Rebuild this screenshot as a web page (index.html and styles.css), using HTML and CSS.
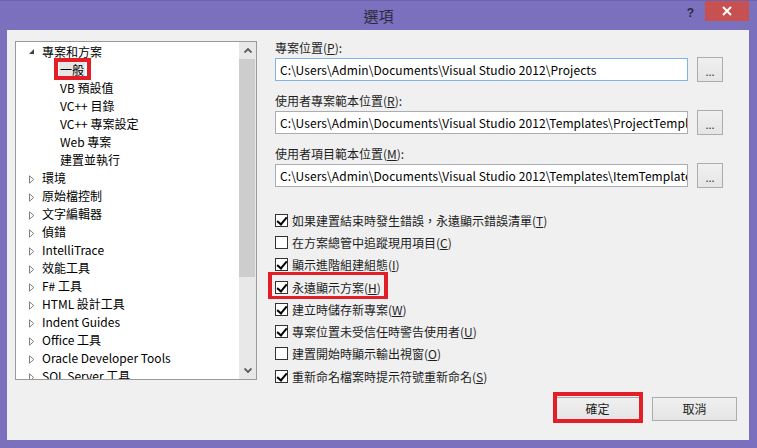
FILE: index.html
```html
<!DOCTYPE html>
<html lang="zh-Hant">
<head>
<meta charset="utf-8">
<title>選項</title>
<link rel="stylesheet" href="styles.css">
</head>
<body>
<div class="window">
  <div class="titlebar">
    <div class="tb-left"></div>
    <div class="title">選項</div>
    <div class="tb-right">
      <div class="help">?</div>
      <div class="close">
        <svg width="10" height="10" viewBox="0 0 10 10"><path d="M1 1 L9 9 M9 1 L1 9" stroke="#fff" stroke-width="2" fill="none"/></svg>
      </div>
    </div>
  </div>
  <div class="client">
    <div class="main">
      <div class="tree">
        <div class="tree-list">
          <div class="node">
            <span class="exp"><svg width="6" height="6" viewBox="0 0 6 6"><path d="M5 0 L5 5 L0 5 Z" fill="#404040"/></svg></span>
            <span class="lbl">專案和方案</span>
          </div>
          <div class="node child selected"><span class="lbl">一般</span><span class="mark mark-general"></span></div>
          <div class="node child"><span class="lbl">VB 預設值</span></div>
          <div class="node child"><span class="lbl">VC++ 目錄</span></div>
          <div class="node child"><span class="lbl">VC++ 專案設定</span></div>
          <div class="node child"><span class="lbl">Web 專案</span></div>
          <div class="node child"><span class="lbl">建置並執行</span></div>
          <div class="node"><span class="exp c"><svg width="6" height="9" viewBox="0 0 6 9"><path d="M0.5 0.8 L4.8 4.5 L0.5 8.2 Z" fill="none" stroke="#808080" stroke-width="1"/></svg></span><span class="lbl">環境</span></div>
          <div class="node"><span class="exp c"><svg width="6" height="9" viewBox="0 0 6 9"><path d="M0.5 0.8 L4.8 4.5 L0.5 8.2 Z" fill="none" stroke="#808080" stroke-width="1"/></svg></span><span class="lbl">原始檔控制</span></div>
          <div class="node"><span class="exp c"><svg width="6" height="9" viewBox="0 0 6 9"><path d="M0.5 0.8 L4.8 4.5 L0.5 8.2 Z" fill="none" stroke="#808080" stroke-width="1"/></svg></span><span class="lbl">文字編輯器</span></div>
          <div class="node"><span class="exp c"><svg width="6" height="9" viewBox="0 0 6 9"><path d="M0.5 0.8 L4.8 4.5 L0.5 8.2 Z" fill="none" stroke="#808080" stroke-width="1"/></svg></span><span class="lbl">偵錯</span></div>
          <div class="node"><span class="exp c"><svg width="6" height="9" viewBox="0 0 6 9"><path d="M0.5 0.8 L4.8 4.5 L0.5 8.2 Z" fill="none" stroke="#808080" stroke-width="1"/></svg></span><span class="lbl">IntelliTrace</span></div>
          <div class="node"><span class="exp c"><svg width="6" height="9" viewBox="0 0 6 9"><path d="M0.5 0.8 L4.8 4.5 L0.5 8.2 Z" fill="none" stroke="#808080" stroke-width="1"/></svg></span><span class="lbl">效能工具</span></div>
          <div class="node"><span class="exp c"><svg width="6" height="9" viewBox="0 0 6 9"><path d="M0.5 0.8 L4.8 4.5 L0.5 8.2 Z" fill="none" stroke="#808080" stroke-width="1"/></svg></span><span class="lbl">F# 工具</span></div>
          <div class="node"><span class="exp c"><svg width="6" height="9" viewBox="0 0 6 9"><path d="M0.5 0.8 L4.8 4.5 L0.5 8.2 Z" fill="none" stroke="#808080" stroke-width="1"/></svg></span><span class="lbl">HTML 設計工具</span></div>
          <div class="node"><span class="exp c"><svg width="6" height="9" viewBox="0 0 6 9"><path d="M0.5 0.8 L4.8 4.5 L0.5 8.2 Z" fill="none" stroke="#808080" stroke-width="1"/></svg></span><span class="lbl">Indent Guides</span></div>
          <div class="node"><span class="exp c"><svg width="6" height="9" viewBox="0 0 6 9"><path d="M0.5 0.8 L4.8 4.5 L0.5 8.2 Z" fill="none" stroke="#808080" stroke-width="1"/></svg></span><span class="lbl">Office 工具</span></div>
          <div class="node"><span class="exp c"><svg width="6" height="9" viewBox="0 0 6 9"><path d="M0.5 0.8 L4.8 4.5 L0.5 8.2 Z" fill="none" stroke="#808080" stroke-width="1"/></svg></span><span class="lbl">Oracle Developer Tools</span></div>
          <div class="node"><span class="exp c"><svg width="6" height="9" viewBox="0 0 6 9"><path d="M0.5 0.8 L4.8 4.5 L0.5 8.2 Z" fill="none" stroke="#808080" stroke-width="1"/></svg></span><span class="lbl">SQL Server 工具</span></div>
        </div>
        <div class="vscroll">
          <div class="sb-btn"><svg width="8" height="5" viewBox="0 0 8 5"><path d="M0.5 4.5 L4 1 L7.5 4.5" fill="none" stroke="#5a5a5a" stroke-width="1.8"/></svg></div>
          <div class="sb-track"><div class="sb-thumb"></div></div>
          <div class="sb-btn"><svg width="8" height="5" viewBox="0 0 8 5"><path d="M0.5 0.5 L4 4 L7.5 0.5" fill="none" stroke="#5a5a5a" stroke-width="1.8"/></svg></div>
        </div>
      </div>
      <div class="panel">
        <div class="field">
          <div class="flabel">專案位置(<u>P</u>):</div>
          <div class="frow">
            <div class="textbox focus">C:\Users\Admin\Documents\Visual Studio 2012\Projects</div>
            <div class="browse">...</div>
          </div>
        </div>
        <div class="field">
          <div class="flabel">使用者專案範本位置(<u>R</u>):</div>
          <div class="frow">
            <div class="textbox">C:\Users\Admin\Documents\Visual Studio 2012\Templates\ProjectTemplates</div>
            <div class="browse">...</div>
          </div>
        </div>
        <div class="field">
          <div class="flabel">使用者項目範本位置(<u>M</u>):</div>
          <div class="frow">
            <div class="textbox">C:\Users\Admin\Documents\Visual Studio 2012\Templates\ItemTemplates</div>
            <div class="browse">...</div>
          </div>
        </div>
        <div class="checks">
          <div class="check"><span class="box on"></span><span>如果建置結束時發生錯誤，永遠顯示錯誤清單(<u>T</u>)</span></div>
          <div class="check"><span class="box"></span><span>在方案總管中追蹤現用項目(<u>C</u>)</span></div>
          <div class="check"><span class="box on"></span><span>顯示進階組建組態(<u>I</u>)</span></div>
          <div class="check"><span class="box on"></span><span>永遠顯示方案(<u>H</u>)</span><span class="mark mark-check"></span></div>
          <div class="check"><span class="box on"></span><span>建立時儲存新專案(<u>W</u>)</span></div>
          <div class="check"><span class="box on"></span><span>專案位置未受信任時警告使用者(<u>U</u>)</span></div>
          <div class="check"><span class="box"></span><span>建置開始時顯示輸出視窗(<u>O</u>)</span></div>
          <div class="check"><span class="box on"></span><span>重新命名檔案時提示符號重新命名(<u>S</u>)</span></div>
        </div>
        <div class="sep"></div>
      </div>
    </div>
    <div class="buttons">
      <div class="btn ok">確定<span class="mark mark-ok"></span></div>
      <div class="btn">取消</div>
    </div>
  </div>
</div>
</body>
</html>
```

FILE: styles.css
```css
* { box-sizing: border-box; }
html, body {
  margin: 0;
  padding: 0;
  background: #7a70bd;
}
body {
  font-family: "Noto Sans CJK TC", "Noto Sans", sans-serif;
  font-size: 12px;
  color: #000;
}
.window {
  width: 757px;
  height: 448px;
  background: #7a70bd;
  border-top: 1px solid #6d63b2;
  display: flex;
  flex-direction: column;
}
.titlebar {
  height: 29px;
  display: grid;
  grid-template-columns: 1fr auto 1fr;
  align-items: start;
}
.title {
  font-size: 15px;
  line-height: 15px;
  padding-top: 7px;
  color: #2a2a3a;
}
.tb-right {
  display: flex;
  justify-content: flex-end;
  align-items: flex-start;
  padding-right: 8px;
}
.help {
  font-family: "Liberation Sans", sans-serif;
  font-weight: bold;
  font-size: 12px;
  line-height: 12px;
  color: #2a2a3a;
  margin-top: 6px;
  margin-right: 11px;
}
.close {
  width: 44px;
  height: 20px;
  background: #c75050;
  display: flex;
  align-items: center;
  justify-content: center;
}
.client {
  margin: 0 8px 8px 7px;
  height: 410px;
  background: #f0f0f0;
  padding: 9px 0 0 8px;
  display: flex;
  flex-direction: column;
}
.main {
  display: flex;
  height: 341px;
}
.tree {
  margin-top: 2px;
  width: 242px;
  height: 339px;
  border: 1px solid #9a9a9a;
  background: #fff;
  display: flex;
  overflow: hidden;
}
.tree-list {
  flex: 1;
  padding-top: 1px;
  overflow: hidden;
}
.node {
  position: relative;
  height: 18px;
  line-height: 18px;
  display: flex;
  align-items: center;
  padding-left: 13px;
  white-space: nowrap;
}
.exp {
  width: 13px;
  height: 18px;
  display: flex;
  align-items: center;
  padding-bottom: 1px;
}
.exp.c { padding-bottom: 0; padding-top: 2px; }
.node.child { padding-left: 44px; }
.node.selected .lbl {
  background: #e6e6e6;
  padding: 0 1px;
  margin-left: -1px;
}
.vscroll {
  width: 17px;
  background: #e8e8e8;
  display: flex;
  flex-direction: column;
}
.sb-btn {
  height: 17px;
  display: flex;
  align-items: center;
  justify-content: center;
}
.sb-track {
  flex: 1;
}
.sb-thumb {
  width: 16px;
  height: 218px;
  background: #cdcdcd;
}
.panel {
  margin-left: 18px;
  width: 460px;
  display: flex;
  flex-direction: column;
}
.field { margin-bottom: 10px; }
.field:last-of-type { margin-bottom: 0; }
.flabel {
  height: 18px;
  line-height: 18px;
  color: #1e1e1e;
}
.frow {
  height: 25px;
  display: flex;
  align-items: center;
  gap: 9px;
}
.textbox {
  width: 413px;
  height: 23px;
  border: 1px solid #abadb3;
  background: #fff;
  padding-left: 4px;
  line-height: 21px;
  white-space: nowrap;
  overflow: hidden;
  letter-spacing: 0.08px;
  color: #000;
}
.textbox.focus { border-color: #7eb4ea; }
.browse {
  width: 26px;
  height: 25px;
  border: 1px solid #acacac;
  background: linear-gradient(#f0f0f0, #e5e5e5);
  text-align: center;
  line-height: 26px;
  font-size: 11px;
  color: #333;
}
.checks {
  margin-top: 11px;
  display: flex;
  flex-direction: column;
}
.check {
  position: relative;
  height: 22.3px;
  display: flex;
  align-items: center;
  gap: 4px;
  white-space: nowrap;
  color: #1e1e1e;
}
.box {
  width: 13px;
  height: 13px;
  border: 1px solid #333;
  background: #fff;
  flex: none;
  position: relative;
}
.box.on::after {
  content: "";
  position: absolute;
  left: 3px;
  top: 0px;
  width: 4px;
  height: 8px;
  border-right: 2px solid #000;
  border-bottom: 2px solid #000;
  transform: rotate(40deg);
}
.sep {
  margin-top: 1px;
  height: 1px;
  background: #a0a0a0;
}
.buttons {
  margin-top: 17px;
  display: flex;
  justify-content: flex-end;
  gap: 12px;
  padding-right: 12px;
}
.btn {
  position: relative;
  width: 85px;
  height: 24px;
  border: 1px solid #acacac;
  background: linear-gradient(#f0f0f0, #e5e5e5);
  text-align: center;
  line-height: 22px;
  color: #1e1e1e;
}
.mark {
  position: absolute;
  border: 4px solid #e41e26;
  pointer-events: none;
}
.mark-general {
  left: 38px;
  top: -3px;
  width: 37px;
  height: 22px;
}
.mark-check {
  left: -7px;
  top: -4px;
  width: 120px;
  height: 27px;
  border-width: 3px 4px;
}
.mark-ok {
  left: -3px;
  top: -6px;
  width: 90px;
  height: 31px;
}
```
